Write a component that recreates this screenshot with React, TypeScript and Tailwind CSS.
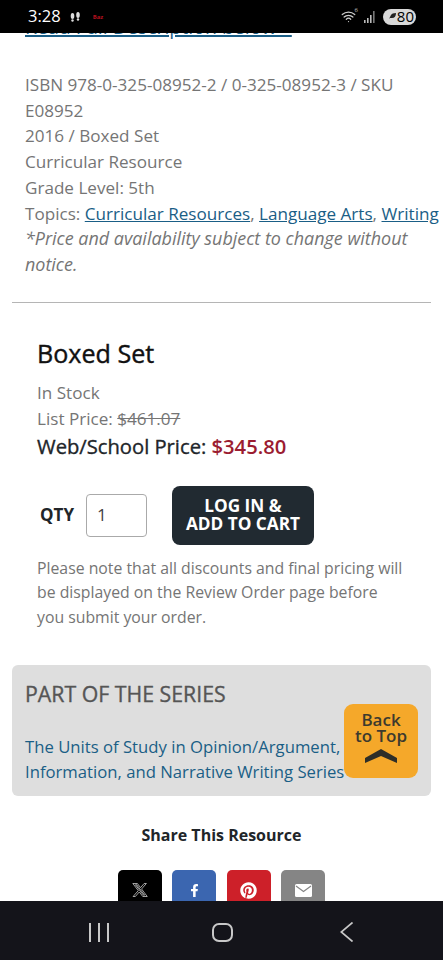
import { Wifi } from "lucide-react"
import { FaFacebookF, FaPinterest } from "react-icons/fa"
import { FaXTwitter } from "react-icons/fa6"

const font = { fontFamily: '"Open Sans", sans-serif' }

function StatusBar() {
  return (
    <div className="flex h-[33px] shrink-0 items-center justify-between bg-black pl-[28px] pr-[27px] text-white">
      <div className="flex items-center gap-[9px]">
        <span className="text-[16.5px] leading-none">3:28</span>
        <svg width="11" height="10" viewBox="0 0 11 10" fill="#ddd">
          <ellipse cx="2.5" cy="4" rx="1.8" ry="3" />
          <ellipse cx="8" cy="3" rx="1.8" ry="3" />
          <circle cx="2.5" cy="8.5" r="1.2" />
          <circle cx="8" cy="7.5" r="1.2" />
        </svg>
        <span className="ml-[3px] text-[6px] font-bold leading-none text-[#b3101e]">Baz</span>
      </div>
      <div className="flex items-center gap-[7px]">
        <div className="relative w-[16px]">
          <Wifi size={15} strokeWidth={2} className="text-[#ccc]" />
          <span className="absolute -right-[1px] -top-[2px] text-[6px] leading-none text-[#ccc]">6</span>
        </div>
        <svg width="12" height="12" viewBox="0 0 12 12" fill="#bbb">
          <rect x="0" y="9" width="1.6" height="3" />
          <rect x="3" y="7" width="1.6" height="5" />
          <rect x="6" y="4" width="1.6" height="8" />
          <rect x="9" y="0" width="1.6" height="12" fill="#777" />
        </svg>
        <div className="flex h-[16px] w-[33px] items-center justify-end rounded-full bg-[#d9d9d9] pr-[2px] text-[15px] leading-none text-black">
          <svg width="7" height="7" viewBox="0 0 7 7" className="mr-[1px]">
            <path d="M0 6 L2 2 Q3 0 7 0 Q7 5 3 5 L1 5 Z" fill="#222" />
          </svg>
          80
        </div>
      </div>
    </div>
  )
}

function ShareButtons() {
  return (
    <div className="mt-[23px] flex justify-center gap-[10.4px]">
      <div className="flex h-[44px] w-[44px] items-center justify-center rounded-[5px] bg-black pb-[4px] text-white">
        <FaXTwitter size={16} fill="none" stroke="white" strokeWidth={20} />
      </div>
      <div className="flex h-[44px] w-[44px] items-center justify-center rounded-[5px] bg-[#3b66b0] pb-[4px] text-white">
        <FaFacebookF size={13} />
      </div>
      <div className="flex h-[44px] w-[44px] items-center justify-center rounded-[5px] bg-[#cd2029] pb-[4px] text-white">
        <FaPinterest size={17} />
      </div>
      <div className="flex h-[44px] w-[44px] items-center justify-center rounded-[5px] bg-[#858585] pb-[4px]">
        <svg width="17" height="13" viewBox="0 0 17 13">
          <rect width="17" height="13" rx="1.5" fill="white" />
          <path d="M1 2 L8.5 7.5 L16 2" fill="none" stroke="#858585" strokeWidth="1.2" />
        </svg>
      </div>
    </div>
  )
}

function NavBar() {
  return (
    <div className="flex h-[59px] shrink-0 items-center justify-between bg-[#14141a] pl-[89px] pr-[90px] pt-[3px]">
      <div className="flex gap-[7px]">
        <div className="h-[19px] w-[2px] bg-[#c8c8c8]" />
        <div className="h-[19px] w-[2px] bg-[#c8c8c8]" />
        <div className="h-[19px] w-[2px] bg-[#c8c8c8]" />
      </div>
      <div className="mr-[4px] h-[19px] w-[21px] rounded-[7px] border-2 border-[#c8c8c8]" />
      <svg width="13" height="20" viewBox="0 0 13 20" fill="none" stroke="#c8c8c8" strokeWidth="1.7">
        <path d="M12.5 0.5 L1.2 10 L12.5 19.5" />
      </svg>
    </div>
  )
}

export default function App() {
  return (
    <div className="relative flex h-[960px] w-[443px] flex-col overflow-hidden bg-white" style={font}>
      <StatusBar />
      <main className="min-h-0 flex-1 overflow-hidden text-[#757575]">
        <div className="-mt-[19px] whitespace-pre px-[25px] text-[19.5px] leading-[26px]">
          <a className="text-[#1a5e86] underline decoration-2">Read Full Description below   </a>
        </div>
        <div className="mt-[32px] whitespace-nowrap px-[25px] text-[17.1px] leading-[25.7px]">
          <p>ISBN 978-0-325-08952-2 / 0-325-08952-3 / SKU</p>
          <p>E08952</p>
          <p>2016 / Boxed Set</p>
          <p>Curricular Resource</p>
          <p>Grade Level: 5th</p>
          <p>
            Topics: <a className="text-[#1a5e86] underline">Curricular Resources</a>,{" "}
            <a className="text-[#1a5e86] underline">Language Arts</a>,{" "}
            <a className="text-[#1a5e86] underline">Writing</a>
          </p>
          <p className="text-[17.95px] italic">*Price and availability subject to change without</p>
          <p className="text-[17.95px] italic">notice.</p>
        </div>
        <hr className="mx-[12px] mt-[24px] border-t-[1.5px] border-[#b5b5b5]" />
        <section className="px-[37px] pt-[34px]">
          <h2 className="text-[25.1px] leading-[32px] text-[#111] [-webkit-text-stroke:0.4px]">Boxed Set</h2>
          <p className="mt-[11px] text-[17.1px] leading-[26px]">In Stock</p>
          <p className="text-[17.1px] leading-[26px]">
            List Price: <span className="line-through">$461.07</span>
          </p>
          <p className="text-[20.2px] leading-[28px] text-[#212529] [-webkit-text-stroke:0.35px]">
            Web/School Price: <span className="font-semibold text-[#9b1c31] [-webkit-text-stroke:0]">$345.80</span>
          </p>
          <div className="mt-[26px] flex items-center">
            <span className="ml-[3px] text-[17px] font-bold text-[#212529]">QTY</span>
            <div className="ml-[12px] flex h-[43px] w-[61px] items-center rounded-[4px] border border-[#aaa] pl-[10px] text-[17.1px] text-[#444]">
              1
            </div>
            <button className="ml-[25px] flex h-[59px] w-[142px] flex-col items-center justify-center rounded-[8px] bg-[#212a31] text-[17.2px] font-bold leading-[18px] text-white">
              <span>LOG IN &amp;</span>
              <span>ADD TO CART</span>
            </button>
          </div>
          <p className="mt-[11px] text-[15.8px] leading-[24.5px]">
            Please note that all discounts and final pricing will be displayed on the Review Order page before you submit your order.
          </p>
        </section>
        <section className="mx-[12px] mt-[36px] h-[131px] rounded-[6px] bg-[#dedede] px-[13px] pt-[15px]">
          <h3 className="text-[21.3px] leading-[28px] text-[#555] [-webkit-text-stroke:0.35px]">PART OF THE SERIES</h3>
          <a className="mt-[27px] block whitespace-nowrap text-[16.7px] leading-[24.5px] text-[#1a5e86]">
            The Units of Study in Opinion/Argument,
            <br />
            Information, and Narrative Writing Series
          </a>
        </section>
        <p className="mt-[27px] text-center text-[16px] font-bold leading-[24px] text-[#212529]">Share This Resource</p>
        <ShareButtons />
      </main>
      <NavBar />
      <div className="absolute left-[344px] top-[704px] flex h-[74px] w-[74px] flex-col items-center rounded-[9px] bg-[#f5a82a] pt-[8px] text-[#3d3a2e]">
        <span className="text-[17px] font-semibold leading-[16px]">Back</span>
        <span className="text-[17px] font-semibold leading-[16px]">to Top</span>
        <svg width="32" height="14" viewBox="0 0 32 14" className="mt-[5px]" fill="#2e2e28">
          <path d="M0 9 L16 0 L32 9 L32 14 L16 7 L0 14 Z" />
        </svg>
      </div>
    </div>
  )
}
